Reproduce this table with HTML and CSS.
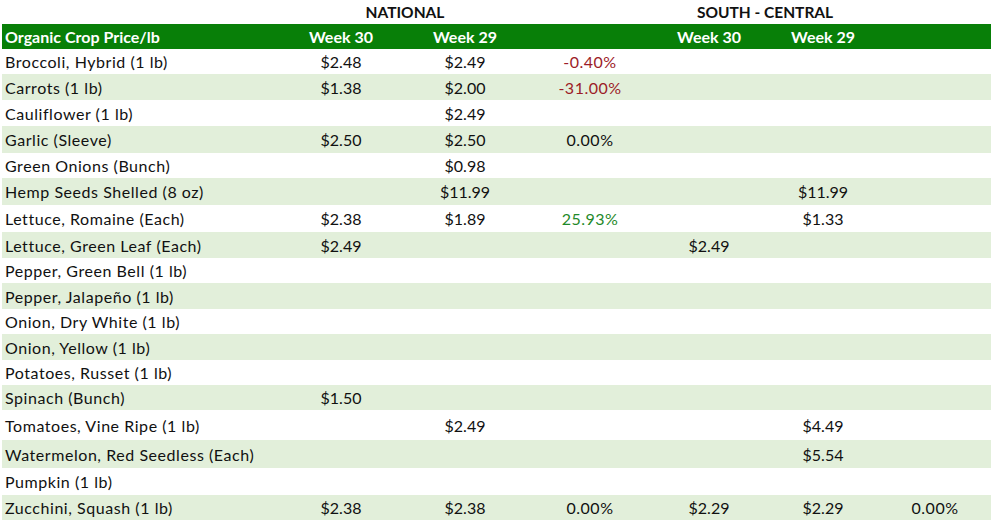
FILE: index.html
```html
<!DOCTYPE html>
<html>
<head>
<meta charset="utf-8">
<link rel="stylesheet" href="styles.css">
</head>
<body>
<table class="sheet">
  <colgroup>
    <col class="c-name"><col class="c-n30"><col class="c-n29"><col class="c-npct"><col class="c-s30"><col class="c-s29"><col class="c-spct">
  </colgroup>
  <thead>
    <tr class="title">
      <th></th>
      <th colspan="2">NATIONAL</th>
      <th></th>
      <th colspan="2">SOUTH - CENTRAL</th>
      <th></th>
    </tr>
    <tr class="head">
      <th class="name">Organic Crop Price/lb</th>
      <th>Week 30</th>
      <th>Week 29</th>
      <th></th>
      <th>Week 30</th>
      <th>Week 29</th>
      <th></th>
    </tr>
  </thead>
  <tbody>
    <tr class="h25"><td class="name">Broccoli, Hybrid (1 lb)</td><td>$2.48</td><td>$2.49</td><td class="pct neg">-0.40%</td><td></td><td></td><td></td></tr>
    <tr class="h26 alt"><td class="name">Carrots (1 lb)</td><td>$1.38</td><td>$2.00</td><td class="pct neg">-31.00%</td><td></td><td></td><td></td></tr>
    <tr class="h26"><td class="name">Cauliflower (1 lb)</td><td></td><td>$2.49</td><td></td><td></td><td></td><td></td></tr>
    <tr class="h27 alt"><td class="name">Garlic (Sleeve)</td><td>$2.50</td><td>$2.50</td><td class="pct">0.00%</td><td></td><td></td><td></td></tr>
    <tr class="h25"><td class="name">Green Onions (Bunch)</td><td></td><td>$0.98</td><td></td><td></td><td></td><td></td></tr>
    <tr class="h27 alt"><td class="name">Hemp Seeds Shelled (8 oz)</td><td></td><td>$11.99</td><td></td><td></td><td>$11.99</td><td></td></tr>
    <tr class="h27"><td class="name">Lettuce, Romaine (Each)</td><td>$2.38</td><td>$1.89</td><td class="pct pos">25.93%</td><td></td><td>$1.33</td><td></td></tr>
    <tr class="h26 alt"><td class="name">Lettuce, Green Leaf (Each)</td><td>$2.49</td><td></td><td></td><td>$2.49</td><td></td><td></td></tr>
    <tr class="h25"><td class="name">Pepper, Green Bell (1 lb)</td><td></td><td></td><td></td><td></td><td></td><td></td></tr>
    <tr class="h26 alt"><td class="name">Pepper, Jalapeño (1 lb)</td><td></td><td></td><td></td><td></td><td></td><td></td></tr>
    <tr class="h25"><td class="name">Onion, Dry White (1 lb)</td><td></td><td></td><td></td><td></td><td></td><td></td></tr>
    <tr class="h26 alt"><td class="name">Onion, Yellow (1 lb)</td><td></td><td></td><td></td><td></td><td></td><td></td></tr>
    <tr class="h25"><td class="name">Potatoes, Russet (1 lb)</td><td></td><td></td><td></td><td></td><td></td><td></td></tr>
    <tr class="h25 alt"><td class="name">Spinach (Bunch)</td><td>$1.50</td><td></td><td></td><td></td><td></td><td></td></tr>
    <tr class="h30"><td class="name">Tomatoes, Vine Ripe (1 lb)</td><td></td><td>$2.49</td><td></td><td></td><td>$4.49</td><td></td></tr>
    <tr class="h28 alt"><td class="name">Watermelon, Red Seedless (Each)</td><td></td><td></td><td></td><td></td><td>$5.54</td><td></td></tr>
    <tr class="h27"><td class="name">Pumpkin (1 lb)</td><td></td><td></td><td></td><td></td><td></td><td></td></tr>
    <tr class="h25 alt"><td class="name">Zucchini, Squash (1 lb)</td><td>$2.38</td><td>$2.38</td><td class="pct">0.00%</td><td>$2.29</td><td>$2.29</td><td class="pct">0.00%</td></tr>
  </tbody>
</table>
</body>
</html>
```
FILE: styles.css
```css
html, body {
  margin: 0;
  padding: 0;
  background: #ffffff;
}
.sheet {
  margin-left: 2px;
  width: 989px;
  table-layout: fixed;
  border-collapse: collapse;
  border-spacing: 0;
  font-family: Lato, "Liberation Sans", sans-serif;
  font-size: 16px;
  color: #111111;
}
.c-name { width: 279px; }
.c-n30 { width: 120px; }
.c-n29 { width: 128px; }
.c-npct { width: 122px; }
.c-s30 { width: 116px; }
.c-s29 { width: 112px; }
.c-spct { width: 112px; }
.sheet th, .sheet td {
  padding: 0;
  text-align: center;
  vertical-align: middle;
  white-space: nowrap;
  overflow: hidden;
}
.sheet td.name {
  letter-spacing: 0.55px;
}
.sheet .name {
  text-align: left;
  padding-left: 3px;
}
.sheet td.pct {
  letter-spacing: 0.5px;
}
.title th {
  height: 24px;
  font-weight: 700;
  font-size: 15.5px;
  color: #111111;
  background: #ffffff;
}
.head th {
  height: 25px;
  background: #087f08;
  color: #ffffff;
  font-weight: 700;
  font-size: 16px;
}
.alt td { background: #e2efda; }
.h25 td { height: 25px; }
.h26 td { height: 26px; }
.h27 td { height: 27px; }
.h28 td { height: 28px; }
.h30 td { height: 30px; }
.neg { color: #9c1c28; }
.pos { color: #1f8a2a; }
```
